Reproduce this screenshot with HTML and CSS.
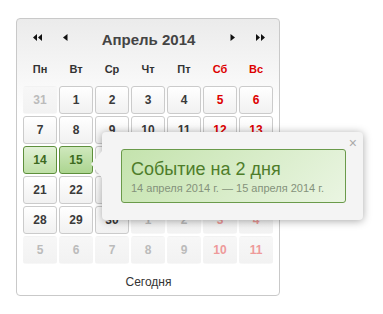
FILE: index.html
```html
<!DOCTYPE html>
<html lang="ru">
<head>
    <meta charset="UTF-8">
    <title>Календарь</title>
    <link rel="stylesheet" href="styles.css">
</head>
<body>
    <div id="calendar">
        <div class="cal-head">
            <span class="nav"><svg width="9" height="7" viewBox="0 0 9 7"><path d="M0 3.5L4 0V7Z M5 3.5L9 0V7Z" fill="#111"/></svg></span>
            <span class="nav"><svg width="5" height="7" viewBox="0 0 5 7"><path d="M0 3.5L4.5 0V7Z" fill="#111"/></svg></span>
            <span class="title">Апрель 2014</span>
            <span class="nav"><svg width="5" height="7" viewBox="0 0 5 7"><path d="M5 3.5L0.5 0V7Z" fill="#111"/></svg></span>
            <span class="nav"><svg width="9" height="7" viewBox="0 0 9 7"><path d="M4 3.5L0 0V7Z M9 3.5L5 0V7Z" fill="#111"/></svg></span>
        </div>
        <div class="weekdays">
            <span>Пн</span><span>Вт</span><span>Ср</span><span>Чт</span><span>Пт</span><span class="we">Сб</span><span class="we">Вс</span>
        </div>
        <div class="days">
            <span class="day other">31</span><span class="day">1</span><span class="day">2</span><span class="day">3</span><span class="day">4</span><span class="day we">5</span><span class="day we">6</span>
            <span class="day">7</span><span class="day">8</span><span class="day">9</span><span class="day">10</span><span class="day">11</span><span class="day we">12</span><span class="day we">13</span>
            <span class="day sel">14</span><span class="day sel hover">15</span><span class="day">16</span><span class="day">17</span><span class="day">18</span><span class="day we">19</span><span class="day we">20</span>
            <span class="day">21</span><span class="day">22</span><span class="day">23</span><span class="day">24</span><span class="day">25</span><span class="day we">26</span><span class="day we">27</span>
            <span class="day">28</span><span class="day">29</span><span class="day">30</span><span class="day other">1</span><span class="day other">2</span><span class="day other we">3</span><span class="day other we">4</span>
            <span class="day other">5</span><span class="day other">6</span><span class="day other">7</span><span class="day other">8</span><span class="day other">9</span><span class="day other we">10</span><span class="day other we">11</span>
        </div>
        <div class="today">Сегодня</div>

        <div class="popup">
            <span class="close">×</span>
            <div class="event">
                <div class="event-title">Событие на 2 дня</div>
                <div class="event-dates">14 апреля 2014 г. — 15 апреля 2014 г.</div>
            </div>
        </div>
    </div>
</body>
</html>
```

FILE: styles.css
```css
body{
    margin: 0;
    background: #fff;
    font-family: "Liberation Sans", Arial, sans-serif;
}
#calendar{
    position: relative;
    width: 251px;
    height: 276px;
    margin: 18px 0 0 16px;
    padding: 0 5px 0 6px;
    border: 1px solid #c9c9c9;
    border-radius: 4px;
    background: linear-gradient(#ebebeb, #fff 95px);
}
.cal-head{
    height: 40px;
    display: flex;
    align-items: center;
}
.nav{
    width: 28px;
    display: flex;
    justify-content: center;
    margin-top: -3px;
}
.title{
    flex: 1;
    text-align: center;
    font-size: 15px;
    font-weight: bold;
    color: #444;
}
.weekdays{
    height: 20px;
    display: grid;
    grid-template-columns: repeat(7, 34px);
    column-gap: 2px;
    align-items: center;
    margin-bottom: 7px;
}
.weekdays span{
    text-align: center;
    font-size: 11px;
    font-weight: bold;
    color: #333;
}
.weekdays .we{
    color: #d00;
}
.days{
    display: grid;
    grid-template-columns: repeat(7, 34px);
    grid-auto-rows: 28px;
    gap: 2px;
}
.day{
    box-sizing: border-box;
    border: 1px solid #cbcbcb;
    border-radius: 3px;
    background: linear-gradient(#fff, #f1f1f1);
    display: flex;
    align-items: center;
    justify-content: center;
    font-size: 12px;
    font-weight: bold;
    color: #3a3a3a;
}
.day.we{
    color: #d00;
}
.day.other{
    border-color: transparent;
    background: linear-gradient(#f7f7f7, #f2f2f2);
    color: #bbb;
}
.day.other.we{
    color: #ee9a9a;
}
.day.sel{
    border-color: #5e8f3c;
    background: linear-gradient(#e2f1d7, #bfe0a7);
    color: #3d6a20;
}
.day.sel.hover{
    background: linear-gradient(#cfe8bd, #acd590);
}
.today{
    padding-top: 8px;
    line-height: 20px;
    text-align: center;
    font-size: 12px;
    color: #333;
}
.popup{
    position: absolute;
    left: 85px;
    top: 113px;
    width: 261px;
    height: 88px;
    box-sizing: border-box;
    padding: 17px 0 0 19px;
    background: #f4f4f4;
    border-radius: 4px;
    box-shadow: 0 1px 8px rgba(0, 0, 0, 0.35);
}
.popup::before{
    content: "";
    position: absolute;
    left: -11px;
    top: 19px;
    border-right: 11px solid #f4f4f4;
    border-top: 13px solid transparent;
    border-bottom: 14px solid transparent;
}
.close{
    position: absolute;
    right: 6px;
    top: 3px;
    font-size: 14px;
    color: #aaa;
}
.event{
    width: 225px;
    height: 54px;
    box-sizing: border-box;
    padding: 8px 0 0 9px;
    border: 1px solid #6a9a4a;
    border-radius: 3px;
    background: linear-gradient(135deg, #c4e3ad, #eaf5e2);
}
.event-title{
    font-size: 18px;
    line-height: 22px;
    color: #4e7d2a;
}
.event-dates{
    margin-top: 2px;
    font-size: 11px;
    color: #84927b;
}
```
